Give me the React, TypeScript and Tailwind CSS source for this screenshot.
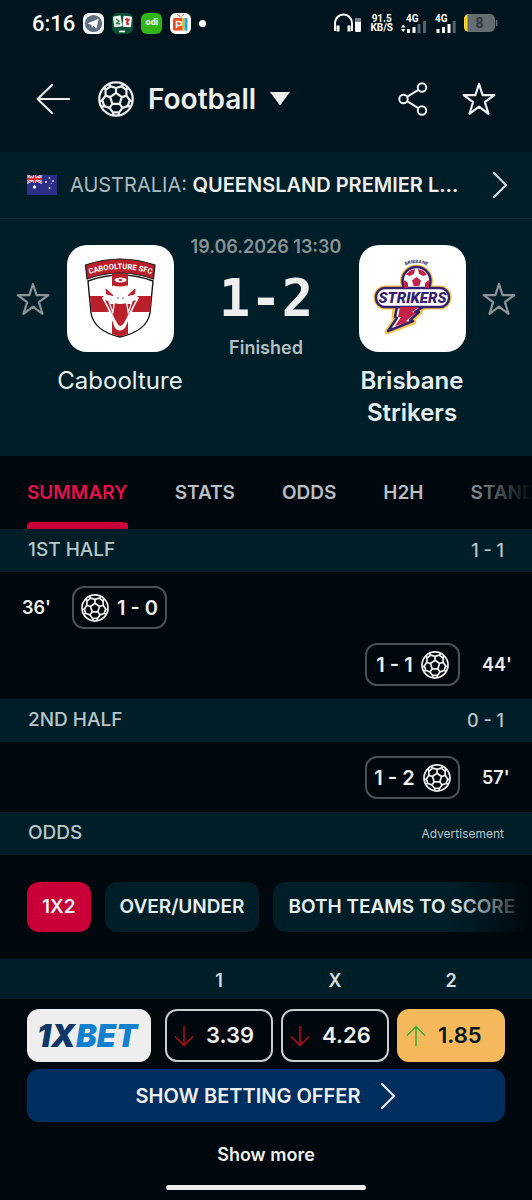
import React, { useState } from 'react';
import clsx from 'clsx';

interface Goal {
  minute: string;
  score: string;
  side: 'home' | 'away';
}

interface Odd {
  label: string;
  value: string;
  trend: 'up' | 'down';
  won?: boolean;
}

const tabs = ['SUMMARY', 'STATS', 'ODDS', 'H2H', 'STANDINGS'];
const markets = ['1X2', 'OVER/UNDER', 'BOTH TEAMS TO SCORE'];

const firstHalf: Goal[] = [
  { minute: "36'", score: '1 - 0', side: 'home' },
  { minute: "44'", score: '1 - 1', side: 'away' },
];

const secondHalf: Goal[] = [{ minute: "57'", score: '1 - 2', side: 'away' }];

const odds: Odd[] = [
  { label: '1', value: '3.39', trend: 'down' },
  { label: 'X', value: '4.26', trend: 'down' },
  { label: '2', value: '1.85', trend: 'up', won: true },
];

const polar = (r: number, deg: number) => {
  const a = (deg * Math.PI) / 180;
  return `${(17 + r * Math.cos(a)).toFixed(2)} ${(17 + r * Math.sin(a)).toFixed(2)}`;
};

// centre pentagon, its five spokes, and the patches that run into the rim
const ballPath = [-90, -18, 54, 126, 198]
  .map(
    (a) =>
      `M${polar(5.8, a)}L${polar(5.8, a + 72)}` +
      `M${polar(5.8, a)}L${polar(10.4, a)}` +
      `M${polar(15.6, a - 27)}L${polar(13, a - 23)}L${polar(10.4, a)}L${polar(13, a + 23)}L${polar(15.6, a + 27)}` +
      `M${polar(13, a + 23)}L${polar(13, a + 49)}`
  )
  .join('');

function BallIcon({ className }: { className?: string }) {
  return (
    <svg viewBox="0 0 34 34" className={className} fill="none" stroke="currentColor" strokeWidth="2.1" strokeLinejoin="round">
      <circle cx="17" cy="17" r="15.8" />
      <path d={ballPath} />
    </svg>
  );
}

function StarIcon({ className }: { className?: string }) {
  return (
    <svg viewBox="0 0 34 34" className={className} fill="none" stroke="currentColor" strokeWidth="2.2" strokeLinejoin="round">
      <path d="M17 2 L20.6 13.2 H32.3 L22.9 20.1 L26.5 31.8 L17 24.7 L7.5 31.8 L11.1 20.1 L1.7 13.2 H13.4 Z" />
    </svg>
  );
}

function ChevronIcon({ className }: { className?: string }) {
  return (
    <svg viewBox="0 0 16 28" className={className} fill="none" stroke="currentColor" strokeWidth="2" strokeLinecap="round">
      <path d="M2 2 L14 14 L2 26" />
    </svg>
  );
}

function TrendIcon({ trend }: { trend: Odd['trend'] }) {
  return (
    <svg
      viewBox="0 0 20 22"
      className={clsx('h-[22px] w-5 shrink-0', trend === 'up' ? 'text-[#2fae3c]' : 'rotate-180 text-[#b80d18]')}
      fill="none"
      stroke="currentColor"
      strokeWidth="1.5"
    >
      <path d="M10 21 V1.5 M1 10.5 L10 1.5 L19 10.5" />
    </svg>
  );
}

function StatusBar() {
  return (
    <div className="flex h-[46px] items-center justify-between pr-[34px] pl-8 font-['Roboto',sans-serif] text-white">
      <div className="flex items-center gap-2">
        <span className="text-[22px] font-medium">6:16</span>
        <svg viewBox="0 0 21 21" className="h-[21px] w-[21px]">
          <rect width="21" height="21" rx="6" fill="#f3f5f6" />
          <circle cx="10.5" cy="10.5" r="8.6" fill="#5d6f80" />
          <path d="M4.4 10.6 L15.6 5.8 L13.6 15.4 L10.4 13 L8.8 14.6 L8.4 11.8 Z" fill="#fff" />
        </svg>
        <svg viewBox="0 0 21 21" className="h-[21px] w-[21px]">
          <rect width="21" height="21" rx="6" fill="#0b5136" />
          <rect x="1.5" y="3" width="8" height="11" rx="1" fill="#e8f1ea" transform="rotate(-8 5 8)" />
          <rect x="11" y="3" width="8.5" height="11" rx="1" fill="#fff" transform="rotate(6 15 8)" />
          <path d="M4 6 l3 2 l-3 3 M4 10 l4 1" stroke="#2f7d4c" strokeWidth="1.3" fill="none" />
          <path d="M13 6.5 h4 l-2 3 l2 2 M15 5 v7" stroke="#d2202c" strokeWidth="1.4" fill="none" />
          <path d="M7 18.5 h6" stroke="#fff" strokeWidth="1.6" />
        </svg>
        <span className="flex h-[21px] w-[21px] items-center justify-center rounded-md bg-[#33b514] text-[9px] font-bold">odi</span>
        <svg viewBox="0 0 21 21" className="h-[21px] w-[21px]">
          <rect width="21" height="21" rx="6" fill="#fff" />
          <path d="M7 1 L10.5 4 L14 1" stroke="#e4572e" strokeWidth="1" fill="none" />
          <rect x="3" y="5" width="10" height="12.5" rx="1.5" fill="#ee4b23" />
          <rect x="12" y="5" width="2.5" height="12.5" fill="#f9b915" />
          <rect x="14.5" y="5" width="3" height="12.5" fill="#23a5e0" />
          <path d="M6.5 15 V8.5 h3 a1.8 1.8 0 0 1 0 4 h-3" stroke="#fff" strokeWidth="1.6" fill="none" />
        </svg>
        <span className="h-[7px] w-[7px] rounded-full bg-white" />
      </div>

      <div className="flex items-center gap-2">
        <svg viewBox="0 0 29 20" className="h-5 w-[29px]" fill="none" stroke="#fff">
          <path d="M2 17 V10 a8.5 8.5 0 0 1 17 0 V17" strokeWidth="2" />
          <path d="M5 12.5 v6 M16 12.5 v6" strokeWidth="3" />
          <path d="M2 12 v6 M19 12 v6" strokeWidth="2" />
          <rect x="22" y="5" width="6" height="14" rx="1.5" fill="#fff" stroke="none" />
          <rect x="22" y="5" width="6" height="4" rx="1.5" fill="#788088" stroke="none" />
        </svg>
        <span className="flex flex-col items-center text-[10px] leading-[9px] font-bold">
          <span>91.5</span>
          <span>KB/S</span>
        </span>
        <svg viewBox="0 0 26 21" className="h-[21px] w-[26px]">
          <text x="5" y="9" fontSize="10" fontWeight="700" fill="#fff">4G</text>
          <path d="M0 14.5 l2.2 -3 l2.2 3 Z M0 16 l2.2 3 l2.2 -3 Z" fill="#fff" />
          <path d="M7.5 20 v-4 M13 20 v-6" stroke="#fff" strokeWidth="3" />
          <path d="M18 20 v-9 M23.5 20 V8" stroke="#56606a" strokeWidth="3" />
        </svg>
        <svg viewBox="0 0 21 21" className="h-[21px] w-[21px]">
          <text x="0" y="9" fontSize="10" fontWeight="700" fill="#fff">4G</text>
          <path d="M3 20 v-4 M8.5 20 v-6 M14 20 v-9" stroke="#fff" strokeWidth="3" />
          <path d="M19.2 20 V8" stroke="#56606a" strokeWidth="3" />
        </svg>
        <svg viewBox="0 0 34 18" className="h-[18px] w-[34px]">
          <rect width="31" height="18" rx="5" fill="#646c74" />
          <path d="M5 0 H3.5 V18 H5 A5 5 0 0 1 0 13 V5 A5 5 0 0 1 5 0Z" fill="#f8d030" />
          <path d="M32.6 6 v6" stroke="#646c74" strokeWidth="1.6" />
          <text x="15.5" y="14" fontSize="14" fontWeight="700" textAnchor="middle" fill="#30363c">8</text>
        </svg>
      </div>
    </div>
  );
}

function Header() {
  return (
    <header className="flex h-[106px] items-center pr-9 pl-9 text-[#eeeeee]">
      <button aria-label="Back">
        <svg viewBox="0 0 34 30" className="h-[30px] w-[34px]" fill="none" stroke="currentColor" strokeWidth="2" strokeLinecap="round" strokeLinejoin="round">
          <path d="M33 15 H1.5 M16 1 L1.5 15 L16 29" />
        </svg>
      </button>
      <button className="ml-7 flex items-center gap-[14px]">
        <BallIcon className="h-9 w-9" />
        <span className="text-[28px] font-semibold">Football</span>
        <svg viewBox="0 0 20 14" className="h-[14px] w-5" fill="currentColor">
          <path d="M0 0 H20 L10 13.5 Z" />
        </svg>
      </button>
      <div className="ml-auto flex items-center gap-[34px]">
        <button aria-label="Share">
          <svg viewBox="0 0 30 34" className="h-[34px] w-[30px]" fill="none" stroke="currentColor" strokeWidth="2">
            <circle cx="5.5" cy="17" r="4.2" />
            <circle cx="24" cy="5.5" r="4.2" />
            <circle cx="24" cy="28.5" r="4.2" />
            <path d="M9 14.8 L20.4 7.8 M9 19.2 L20.4 26.2" />
          </svg>
        </button>
        <button aria-label="Add to favourites">
          <StarIcon className="h-[34px] w-[34px]" />
        </button>
      </div>
    </header>
  );
}

function AustraliaFlag() {
  return (
    <svg viewBox="0 0 30 20" className="h-5 w-[30px] shrink-0">
      <rect width="30" height="20" fill="#2b2f87" />
      <path d="M0 0 L15 8 M15 0 L0 8" stroke="#fff" strokeWidth="2" />
      <path d="M0 0 L15 8 M15 0 L0 8" stroke="#d8263c" strokeWidth="0.8" />
      <path d="M7.5 0 V8 M0 4 H15" stroke="#fff" strokeWidth="3.2" />
      <path d="M7.5 0 V8 M0 4 H15" stroke="#d8263c" strokeWidth="1.8" />
      <circle cx="7.5" cy="12" r="1.7" fill="#fff" />
      <g fill="#fff">
        <circle cx="22.5" cy="2.8" r="0.9" />
        <circle cx="19" cy="7" r="0.9" />
        <circle cx="26" cy="6" r="0.9" />
        <circle cx="24.2" cy="8.6" r="0.5" />
        <circle cx="22.5" cy="13" r="0.9" />
      </g>
    </svg>
  );
}

function CabooltureCrest() {
  return (
    <svg viewBox="0 0 107 107" className="h-[107px] w-full">
      <path d="M21 36 Q54 24 86 36 L83 68 Q80 86 53 92 Q27 86 24 68 Z" fill="#fff" stroke="#141414" strokeWidth="1.4" />
      <path d="M45 29 Q53 28 61 29 V89 L53 91.5 L45 89 Z M23 51 H84.500 L83 67 H24.500 Z" fill="#b9202b" />
      <path d="M45 41 Q53 37 62 41 L68 44 V49 L72 53 L67 62 L58 83 Q53 88 48 83 L40 62 L35 53 L39 49 V44 Z" fill="#fff" />
      <path d="M45 29 Q53 28 61 29 V40 Q53 43 45 40 Z" fill="#b9202b" />
      <path d="M38 55 L47 58 Q53 60 60 58 L69 55 L57 78 Q53 84 50 78 Z" fill="#b9202b" />
      <path d="M41 55.500 L46 70 L48 58 Z M66 55.500 L61 70 L59 58 Z" fill="#fff" />
      <path d="M43.500 59 L45.500 65 L46.500 59 Z M63.500 59 L61.500 65 L60.500 59 Z" fill="#b9202b" />
      <path d="M39 44 L46 50.500 L39.500 49 Z M68 44 L61 50.500 L67.500 49 Z" fill="#b9202b" stroke="#b9202b" />
      <ellipse cx="53.5" cy="35" rx="6" ry="2.6" fill="#fff" />
      <ellipse cx="53.5" cy="35" rx="2" ry="1" fill="#b9202b" />
      <circle cx="51" cy="53" r="0.7" fill="#222" />
      <circle cx="56" cy="53" r="0.7" fill="#222" />
      <path d="M18.500 20 Q53 8 88 20 L86.500 34 Q53 22 20 34 Z" fill="#b9202b" stroke="#141414" strokeWidth="1.2" />
      <path id="crest-arc" d="M20 30 Q53.5 18 87 30" fill="none" />
      <text fontFamily="Roboto, sans-serif" fontSize="7.600" fontWeight="700" fill="#fff" textAnchor="middle">
        <textPath href="#crest-arc" startOffset="50%">CABOOLTURE SFC</textPath>
      </text>
    </svg>
  );
}

function StrikersCrest() {
  return (
    <svg viewBox="0 0 107 107" className="h-[107px] w-full">
      <path id="strikers-arc" d="M42 23 Q57 13 73 23" fill="none" />
      <text fontFamily="Inter, sans-serif" fontSize="4.500" fontWeight="700" fill="#2c2660" textAnchor="middle">
        <textPath href="#strikers-arc" startOffset="50%">BRISBANE</textPath>
      </text>
      <g stroke="#f3c64a" strokeWidth="5" strokeLinejoin="round" fill="#f3c64a">
        <circle cx="57.5" cy="36" r="14" />
        <rect x="17" y="43" width="73" height="19" rx="9" />
        <path d="M36 62 L66 62 L58 67 L61 67 L52 76 L55 77 L28 87 L37 74 L35 73 Z" />
      </g>
      <g stroke="#352070" strokeWidth="2.5" strokeLinejoin="round" fill="#fff">
        <circle cx="57.5" cy="36" r="14" />
        <path d="M38 62 L64 62 L56 67 L60 67 L51 75 L54 76 L29 86 L38 73 L36 72 Z" />
        <rect x="17" y="43" width="73" height="19" rx="9" />
      </g>
      <path d="M41 62 L60 62 L53 67 L57 68 L47 76 L50 77 L36 81 L42 72 L39 72 Z" fill="#c22346" />
      <g fill="#c22346">
        <path d="M57.5 32 L62 35.5 L60.3 41 L54.7 41 L53 35.5 Z" />
        <path d="M51 25.5 L56 24 L55 29 L50.5 31 L47 29.5 Z M64 25.5 L59 24 L60 29 L64.5 31 L68 29.5 Z" />
        <path d="M45 35 L49 38 L49 43 H45 Z M70 35 L66 38 L66 43 H70 Z" />
      </g>
      <text x="53.5" y="58" fontFamily="Roboto, sans-serif" fontSize="15" fontWeight="900" fontStyle="italic" textAnchor="middle" fill="#352070">
        STRIKERS
      </text>
    </svg>
  );
}

interface TeamProps {
  name: string;
  bold?: boolean;
  children: React.ReactNode;
}

function Team({ name, bold, children }: TeamProps) {
  return (
    <div className="mt-[10px] flex w-[134px] shrink-0 flex-col items-center">
      <div className="w-[107px] rounded-[20px] bg-white">{children}</div>
      <h2 className={clsx('mt-[13px] text-center text-[24px] leading-8 text-[#e6f0f2]', bold ? 'font-semibold' : 'font-normal')}>
        {name}
      </h2>
    </div>
  );
}

function FavouriteButton({ label }: { label: string }) {
  return (
    <button aria-label={label} className="mt-[47px] flex w-10 shrink-0 justify-center text-[#8c9296]">
      <StarIcon className="h-[34px] w-[34px]" />
    </button>
  );
}

function MatchHeader() {
  return (
    <section className="flex bg-[#001e28] px-[13px] pt-4 pb-[27px]">
      <FavouriteButton label="Follow Caboolture" />
      <Team name="Caboolture">
        <CabooltureCrest />
      </Team>
      <div className="flex flex-1 flex-col items-center whitespace-nowrap">
        <span className="text-[18px] leading-6 font-semibold text-[#8a9296]">19.06.2026 13:30</span>
        <span className="mt-[13px] font-['DejaVu_Sans_Mono',monospace] text-[52px] leading-[52px] font-bold text-[#eeeeee]">1-2</span>
        <span className="mt-3 text-[18px] leading-6 font-semibold text-[#b4bfc3]">Finished</span>
      </div>
      <Team name="Brisbane Strikers" bold>
        <StrikersCrest />
      </Team>
      <FavouriteButton label="Follow Brisbane Strikers" />
    </section>
  );
}

function SectionTitle({ title, children }: { title: string; children: React.ReactNode }) {
  return (
    <div className="flex h-[43px] items-center justify-between bg-[#001e28] px-7 text-[#b9c6ca]">
      <h3 className="text-[19px] font-medium">{title}</h3>
      {children}
    </div>
  );
}

function GoalRow({ goal }: { goal: Goal }) {
  return (
    <li className={clsx('flex h-[57px] items-center gap-[22px] px-[22px]', goal.side === 'away' && 'flex-row-reverse')}>
      <span className="w-7 text-[18px] font-semibold">{goal.minute}</span>
      <span
        className={clsx(
          'flex h-[43px] w-[95px] items-center justify-center gap-2 rounded-xl border-2 border-[#4a5055]',
          goal.side === 'away' && 'flex-row-reverse'
        )}
      >
        <BallIcon className="h-7 w-7 shrink-0" />
        <span className="text-[20px] font-semibold whitespace-nowrap">{goal.score}</span>
      </span>
    </li>
  );
}

function GoalList({ goals }: { goals: Goal[] }) {
  return (
    <ul className="pt-[7px] pb-[6px] text-[#eeeeee]">
      {goals.map((goal) => (
        <GoalRow key={goal.minute} goal={goal} />
      ))}
    </ul>
  );
}

function OddsTable() {
  return (
    <table className="w-full table-fixed">
      <colgroup>
        <col className="w-[161px]" />
        <col />
        <col />
        <col className="w-[139px]" />
      </colgroup>
      <thead>
        <tr className="h-10 bg-[#001e28] text-[18px] text-[#d5dfe2]">
          <td />
          {odds.map((odd) => (
            <th key={odd.label} className="p-0 pt-[2px] font-semibold last:pr-[23px]">
              {odd.label}
            </th>
          ))}
        </tr>
      </thead>
      <tbody>
        <tr>
          <td className="pt-[10px] pr-[10px] pb-0 pl-[27px]">
            <a href="#" aria-label="1XBET" className="flex h-[53px] items-center justify-center rounded-xl bg-[#eeeeee]">
              <svg viewBox="0 0 116 44" className="h-11 w-[116px]" fontFamily="Inter, sans-serif" fontStyle="italic" fontWeight="900">
                <text x="6" y="33" fontSize="31" fill="#0d3766">1X</text>
                <text x="45" y="33" fontSize="31" fill="#1180cf">BET</text>
              </svg>
            </a>
          </td>
          {odds.map((odd) => (
            <td key={odd.label} className="px-1 pt-[10px] pb-0 last:pr-[27px]">
              <button
                className={clsx(
                  'flex h-[53px] w-full items-center gap-3 rounded-xl border-2 pl-[7px] text-[22px] font-semibold',
                  odd.won ? 'border-[#f5b95b] bg-[#f5b95b] text-[#04161c]' : 'border-[#c8cdcf] text-[#eeeeee]'
                )}
              >
                <TrendIcon trend={odd.trend} />
                {odd.value}
              </button>
            </td>
          ))}
        </tr>
      </tbody>
    </table>
  );
}

export default function App() {
  const [tab, setTab] = useState('SUMMARY');
  const [market, setMarket] = useState('1X2');

  return (
    <div className="min-h-screen overflow-hidden bg-[#00080d] font-['Inter',sans-serif]">
      <div className="bg-[#00141e]">
        <StatusBar />
        <Header />
      </div>

      <a href="#" className="flex h-[67px] items-center border-b border-[#0d2d38] bg-[#001e28] pr-6 pl-[27px]">
        <AustraliaFlag />
        <span className="ml-[13px] flex-1 text-[20px] whitespace-nowrap text-[#a9bac0]">
          AUSTRALIA: <strong className="font-semibold text-[#eeeeee]">QUEENSLAND PREMIER L...</strong>
        </span>
        <ChevronIcon className="h-7 w-4 shrink-0 text-[#d5dfe2]" />
      </a>

      <MatchHeader />

      <nav className="relative overflow-hidden">
        <div className="flex h-[73px] gap-[47px] px-[27px]">
          {tabs.map((name) => (
            <button
              key={name}
              onClick={() => setTab(name)}
              className={clsx('flex flex-col justify-between pt-[25px] text-[19px] leading-6 font-semibold', tab === name ? 'text-[#e6114c]' : 'text-[#b9bec4]')}
            >
              {name}
              {tab === name && <span className="h-[7px] w-full rounded-t bg-[#c80037]" />}
            </button>
          ))}
        </div>
        <div className="pointer-events-none absolute inset-y-0 right-0 w-20 bg-gradient-to-r from-transparent to-[#00080d]" />
      </nav>

      <SectionTitle title="1ST HALF">
        <span className="text-[18px] font-medium">1 - 1</span>
      </SectionTitle>
      <GoalList goals={firstHalf} />

      <SectionTitle title="2ND HALF">
        <span className="text-[18px] font-medium">0 - 1</span>
      </SectionTitle>
      <GoalList goals={secondHalf} />

      <SectionTitle title="ODDS">
        <span className="text-[12px]">Advertisement</span>
      </SectionTitle>

      <div className="relative overflow-hidden py-[27px]">
        <div className="flex gap-[14px] pl-[27px]">
          {markets.map((name) => (
            <button
              key={name}
              onClick={() => setMarket(name)}
              className={clsx(
                'h-[50px] shrink-0 rounded-xl px-[15px] text-[19px] font-semibold whitespace-nowrap text-[#e6f0f2]',
                market === name ? 'bg-[#c80037]' : 'bg-[#001e28]'
              )}
            >
              {name}
            </button>
          ))}
        </div>
        <div className="pointer-events-none absolute inset-y-0 right-0 w-20 bg-gradient-to-r from-transparent to-[#00080d]" />
      </div>

      <OddsTable />

      <div className="px-[27px] pt-[7px]">
        <button className="flex h-[53px] w-full items-center justify-center gap-5 rounded-xl bg-[#002f5f] text-[20px] font-semibold text-[#eeeeee]">
          SHOW BETTING OFFER
          <ChevronIcon className="h-7 w-4" />
        </button>
      </div>

      <button className="mt-[21px] block w-full text-center text-[18px] leading-6 font-semibold text-[#eeeeee]">Show more</button>
      <div className="mx-auto mt-[18px] h-[5px] w-[200px] rounded-full bg-[#eeeeee]" />
    </div>
  );
}
